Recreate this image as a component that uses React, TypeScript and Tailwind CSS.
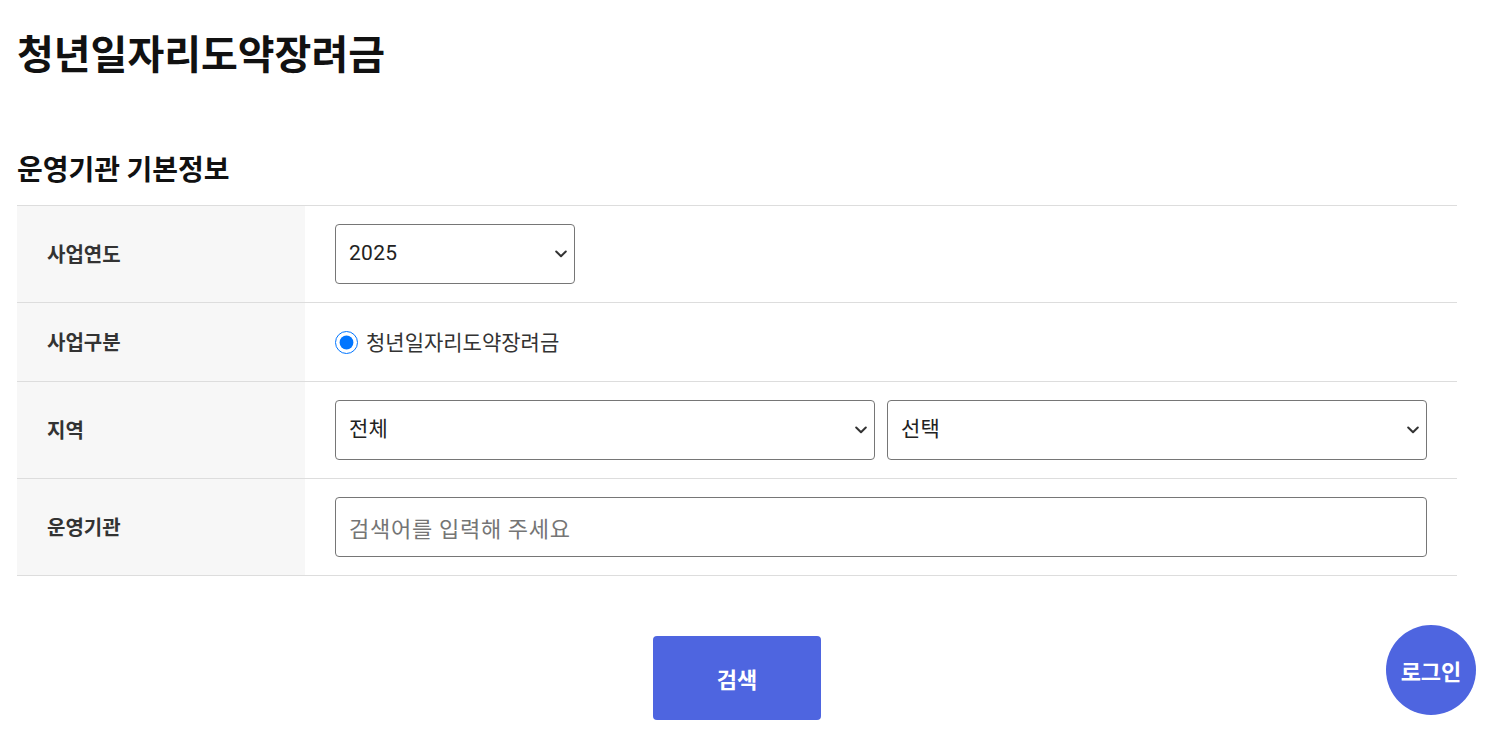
import { ChangeEvent, useState } from "react";

const FONT = `"Noto Sans CJK KR", "Noto Sans", sans-serif`;

function Row({
  label,
  tall = true,
  children,
}: {
  label: string;
  tall?: boolean;
  children: React.ReactNode;
}) {
  return (
    <div className="flex border-b border-[#dddddd]">
      <div
        className={`flex w-[288px] shrink-0 items-center bg-[#f7f7f7] px-[30px] text-[20px] font-bold text-[#333333] ${
          tall ? "h-[96px]" : "h-[78px]"
        }`}
      >
        {label}
      </div>
      <div className="flex flex-1 items-center gap-[12px] px-[30px]">{children}</div>
    </div>
  );
}

const fieldClass =
  "h-[60px] w-full rounded-[4px] border border-[#767676] bg-white px-[13px] text-[21px] text-[#222222] outline-none";

function Select({
  className,
  options,
  value,
  onChange,
}: {
  className: string;
  options: string[];
  value?: string;
  onChange?: (v: string) => void;
}) {
  return (
    <div className={`relative ${className}`}>
      <select
        value={value}
        onChange={(e: ChangeEvent<HTMLSelectElement>) => onChange?.(e.target.value)}
        className={`${fieldClass} appearance-none pr-[36px] tracking-[0.3px]`}
        style={{ fontFamily: `Roboto, "Noto Sans CJK KR", sans-serif` }}
      >
        {options.map((o) => (
          <option key={o}>{o}</option>
        ))}
      </select>
      <svg
        aria-hidden
        viewBox="0 0 12 8"
        className="pointer-events-none absolute right-[8px] top-1/2 h-[8px] w-[12px] -translate-y-1/2"
        fill="none"
      >
        <path d="M1.2 1.5L6 6.2L10.8 1.5" stroke="#333333" strokeWidth="2" strokeLinecap="round" strokeLinejoin="round" />
      </svg>
    </div>
  );
}

export default function App() {
  const [year, setYear] = useState("2025");
  const [keyword, setKeyword] = useState("");

  return (
    <div className="min-h-screen bg-white px-[17px]" style={{ fontFamily: FONT }}>
      <div className="w-[1440px]">
        <h1 className="pt-[24px] text-[40px] font-bold leading-[56px] text-[#111111]">
          청년일자리도약장려금
        </h1>

        <h2 className="mt-[70px] text-[28px] font-bold leading-[36px] text-[#111111]">
          운영기관 기본정보
        </h2>

        <div className="mt-[19px] border-t border-[#dddddd]">
          <Row label="사업연도">
            <Select className="w-[240px]" options={["2025", "2024", "2023"]} value={year} onChange={setYear} />
          </Row>
          <Row label="사업구분" tall={false}>
            <label className="flex items-center gap-[8px] text-[21px] text-[#333333]">
              <input type="radio" defaultChecked name="biz" className="m-0 h-[23px] w-[23px]" />
              청년일자리도약장려금
            </label>
          </Row>
          <Row label="지역">
            <Select className="flex-1" options={["전체"]} />
            <Select className="flex-1" options={["선택"]} />
          </Row>
          <Row label="운영기관">
            <input
              value={keyword}
              onChange={(e) => setKeyword(e.target.value)}
              placeholder="검색어를 입력해 주세요"
              className={`${fieldClass} text-[22px] tracking-[0.8px] placeholder:text-[#757575]`}
            />
          </Row>
        </div>

        <div className="flex justify-center pt-[60px]">
          <button
            type="button"
            className="h-[84px] w-[168px] rounded-[4px] bg-[#4e65e0] text-[22px] font-bold text-white"
          >
            검색
          </button>
        </div>
      </div>

      <button
        type="button"
        className="fixed bottom-[23px] right-[26px] flex h-[90px] w-[90px] items-center justify-center rounded-full bg-[#4e65e0] text-[22px] font-bold text-white"
      >
        로그인
      </button>
    </div>
  );
}
